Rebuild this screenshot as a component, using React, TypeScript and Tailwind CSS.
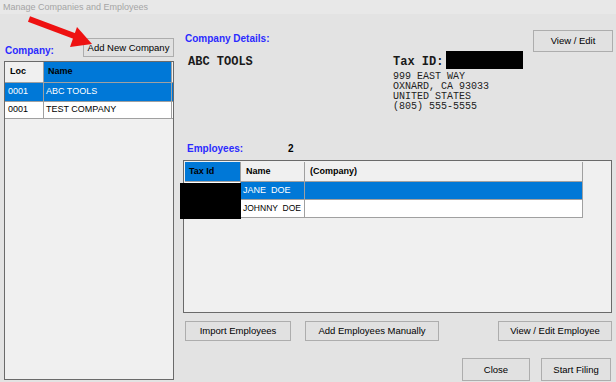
import React from "react";

const btn =
  "flex items-center justify-center whitespace-nowrap bg-[#e1e1e1] border border-[#adadad] text-[9.5px] text-black leading-none";

export default function App() {
  return (
    <div className="relative w-[616px] h-[382px] overflow-hidden bg-[#e3e3e3] font-['Liberation_Sans',sans-serif] text-black">
      {/* title bar */}
      <div className="h-[14px] bg-[#e8e8e8] pl-[3px] text-[9px] leading-[14px] text-[#a5a5a5]">
        Manage Companies and Employees
      </div>

      <div className="flex">
        {/* left column */}
        <div className="w-[176px] pl-[4px] flex flex-col">
          <div className="mt-[24px] h-[19px] flex items-end justify-between pr-[2px]">
            <span className="pl-[1px] text-[10px] leading-[12px] font-bold text-[#2b2bff]">Company:</span>
            <div className={btn + " w-[91px] h-[19px]"}>Add New Company</div>
          </div>
          <div className="mt-[4px] w-[170px] h-[319px] border border-[#6a6a6a] bg-[#f0f0f0] text-[9px] whitespace-nowrap">
            <div className="flex h-[21px] border-b border-[#a0a0a0]">
              <div className="w-[39px] pl-[5px] flex items-center font-bold bg-[#f0f0f0] border-r border-[#a0a0a0]">
                Loc
              </div>
              <div className="w-[128px] pl-[4px] flex items-center font-bold bg-[#0078d7] border-r border-[#a0a0a0]">
                Name
              </div>
            </div>
            <div className="flex h-[18px] bg-[#0078d7] text-white w-[168px]">
              <div className="w-[39px] pl-[3px] flex items-center border-r border-[#a0a0a0]">0001</div>
              <div className="w-[128px] pl-[2px] flex items-center border-r border-[#a0a0a0]">ABC TOOLS</div>
            </div>
            <div className="flex h-[18px] bg-white w-[168px] border-t border-[#a0a0a0] border-b">
              <div className="w-[39px] pl-[3px] flex items-center border-r border-[#a0a0a0]">0001</div>
              <div className="w-[128px] pl-[2px] flex items-center border-r border-[#a0a0a0]">TEST COMPANY</div>
            </div>
          </div>
        </div>

        {/* right column */}
        <div className="w-[440px] pl-[7px] pr-[3px] flex flex-col">
          <div className="mt-[16px] h-[22px] flex justify-between items-start">
            <span className="pl-[2px] pt-[3px] text-[10px] leading-[12px] font-bold text-[#2b2bff]">
              Company Details:
            </span>
            <div className={btn + " w-[80px] h-[22px]"}>View / Edit</div>
          </div>

          <div className="mt-[-1px] flex font-['Liberation_Mono',monospace]">
            <div className="w-[210px] pl-[5px] pt-[2px] text-[12px] font-bold leading-[18px] text-[#1a1a1a]">
              ABC TOOLS
            </div>
            <div className="flex flex-col">
              <div className="h-[18px] flex items-center">
                <span className="text-[12px] font-bold text-[#1a1a1a] pt-[3px]">Tax ID:</span>
                <div className="ml-[3px] w-[77px] h-[18px] bg-black" />
              </div>
              <div className="mt-[3px] text-[10px] leading-[10px] text-[#222] whitespace-pre">
                <div>999 EAST WAY</div>
                <div>OXNARD, CA 93033</div>
                <div>UNITED STATES</div>
                <div>(805) 555-5555</div>
              </div>
            </div>
          </div>

          <div className="mt-[30px] h-[12px] flex items-center text-[10px] font-bold">
            <span className="pl-[4px] w-[105px] text-[#2b2bff]">Employees:</span>
            <span>2</span>
          </div>

          <div className="mt-[6px] w-[429px] h-[153px] border border-[#6a6a6a] bg-[#f0f0f0] pl-[1px] pt-[1px] text-[9px] whitespace-nowrap">
            <div className="w-[398px] flex h-[20px] border-b border-[#a0a0a0] border-r">
              <div className="w-[56px] pl-[4px] flex items-center font-bold bg-[#0078d7] border-r border-[#a0a0a0]">
                Tax Id
              </div>
              <div className="w-[64px] pl-[5px] flex items-center font-bold border-r border-[#a0a0a0]">
                Name
              </div>
              <div className="flex-1 pl-[5px] flex items-center font-bold">(Company)</div>
            </div>
            <div className="w-[398px] flex h-[18px] border-b border-r border-[#a0a0a0]">
              <div className="w-[56px] border-r border-[#a0a0a0] bg-white" />
              <div className="flex-1 flex bg-[#0078d7] text-white">
                <div className="w-[64px] pl-[2px] flex items-center border-r border-[#a0a0a0] whitespace-pre">
                  JANE  DOE
                </div>
                <div className="flex-1" />
              </div>
            </div>
            <div className="w-[398px] flex h-[18px] border-b border-r border-[#a0a0a0] bg-white">
              <div className="w-[56px] border-r border-[#a0a0a0]" />
              <div className="w-[64px] pl-[2px] flex items-center border-r border-[#a0a0a0] whitespace-pre text-[8.5px]">
                JOHNNY  DOE
              </div>
              <div className="flex-1" />
            </div>
          </div>

          <div className="mt-[8px] flex h-[20px] pr-[1px]">
            <div className={btn + " ml-[2px] w-[106px]"}>Import Employees</div>
            <div className={btn + " ml-[14px] w-[134px]"}>Add Employees Manually</div>
            <div className={btn + " ml-auto w-[114px]"}>View / Edit Employee</div>
          </div>

          <div className="mt-[17px] flex justify-end h-[23px] pr-[2px]">
            <div className={btn + " w-[68px]"}>Close</div>
            <div className={btn + " ml-[11px] w-[70px]"}>Start Filing</div>
          </div>
        </div>
      </div>

      {/* redaction over employee tax ids */}
      <div className="absolute left-[180px] top-[183px] w-[61px] h-[36px] bg-black" />

      {/* red annotation arrow */}
      <svg className="absolute left-0 top-0" width="100" height="60" viewBox="0 0 100 60">
        <line x1="29" y1="19" x2="77" y2="37" stroke="#ee1111" strokeWidth="6" />
        <polygon points="77,27 92,44 70,47" fill="#ee1111" />
      </svg>
    </div>
  );
}
